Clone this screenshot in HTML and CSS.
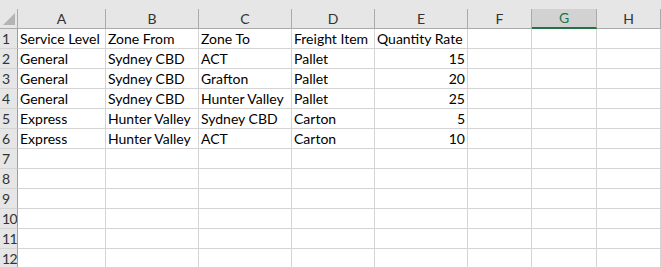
FILE: index.html
```html
<!DOCTYPE html>
<html>
<head>
<meta charset="utf-8">
<link rel="stylesheet" href="styles.css">
</head>
<body>
<div class="sheet">
  <div class="topband"></div>
  <div class="grid">
    <div class="corner"><span class="tri"></span></div>
    <div class="colhead">A</div>
    <div class="colhead">B</div>
    <div class="colhead">C</div>
    <div class="colhead">D</div>
    <div class="colhead">E</div>
    <div class="colhead">F</div>
    <div class="colhead sel">G</div>
    <div class="colhead">H</div>

    <div class="rowhead">1</div>
    <div class="cell">Service Level</div>
    <div class="cell">Zone From</div>
    <div class="cell">Zone To</div>
    <div class="cell">Freight Item</div>
    <div class="cell">Quantity Rate</div>
    <div class="cell"></div><div class="cell"></div><div class="cell"></div>

    <div class="rowhead">2</div>
    <div class="cell">General</div>
    <div class="cell">Sydney CBD</div>
    <div class="cell">ACT</div>
    <div class="cell">Pallet</div>
    <div class="cell num">15</div>
    <div class="cell"></div><div class="cell"></div><div class="cell"></div>

    <div class="rowhead">3</div>
    <div class="cell">General</div>
    <div class="cell">Sydney CBD</div>
    <div class="cell">Grafton</div>
    <div class="cell">Pallet</div>
    <div class="cell num">20</div>
    <div class="cell"></div><div class="cell"></div><div class="cell"></div>

    <div class="rowhead">4</div>
    <div class="cell">General</div>
    <div class="cell">Sydney CBD</div>
    <div class="cell">Hunter Valley</div>
    <div class="cell">Pallet</div>
    <div class="cell num">25</div>
    <div class="cell"></div><div class="cell"></div><div class="cell"></div>

    <div class="rowhead">5</div>
    <div class="cell">Express</div>
    <div class="cell">Hunter Valley</div>
    <div class="cell">Sydney CBD</div>
    <div class="cell">Carton</div>
    <div class="cell num">5</div>
    <div class="cell"></div><div class="cell"></div><div class="cell"></div>

    <div class="rowhead">6</div>
    <div class="cell">Express</div>
    <div class="cell">Hunter Valley</div>
    <div class="cell">ACT</div>
    <div class="cell">Carton</div>
    <div class="cell num">10</div>
    <div class="cell"></div><div class="cell"></div><div class="cell"></div>

    <div class="rowhead">7</div>
    <div class="cell"></div><div class="cell"></div><div class="cell"></div><div class="cell"></div><div class="cell"></div><div class="cell"></div><div class="cell"></div><div class="cell"></div>
    <div class="rowhead">8</div>
    <div class="cell"></div><div class="cell"></div><div class="cell"></div><div class="cell"></div><div class="cell"></div><div class="cell"></div><div class="cell"></div><div class="cell"></div>
    <div class="rowhead">9</div>
    <div class="cell"></div><div class="cell"></div><div class="cell"></div><div class="cell"></div><div class="cell"></div><div class="cell"></div><div class="cell"></div><div class="cell"></div>
    <div class="rowhead">10</div>
    <div class="cell"></div><div class="cell"></div><div class="cell"></div><div class="cell"></div><div class="cell"></div><div class="cell"></div><div class="cell"></div><div class="cell"></div>
    <div class="rowhead">11</div>
    <div class="cell"></div><div class="cell"></div><div class="cell"></div><div class="cell"></div><div class="cell"></div><div class="cell"></div><div class="cell"></div><div class="cell"></div>
    <div class="rowhead">12</div>
    <div class="cell"></div><div class="cell"></div><div class="cell"></div><div class="cell"></div><div class="cell"></div><div class="cell"></div><div class="cell"></div><div class="cell"></div>
  </div>
</div>
</body>
</html>
```

FILE: styles.css
```css
html, body {
  margin: 0;
  padding: 0;
  background: #ffffff;
  overflow: hidden;
}

.sheet {
  width: 661px;
  font-family: Lato, "Open Sans", sans-serif;
  font-size: 14px;
  color: #000;
}

.topband {
  height: 9px;
  background: #e6e6e6;
}

.grid {
  display: grid;
  grid-template-columns: 18px 88px 93px 93px 83px 93px 64px 65px 64px;
  grid-auto-rows: 20px;
}

.corner {
  background: #e6e6e6;
  border-right: 1px solid #ababab;
  border-bottom: 1px solid #ababab;
  position: relative;
}

.tri {
  position: absolute;
  right: 2px;
  bottom: 3px;
  width: 0;
  height: 0;
  border-left: 12px solid transparent;
  border-bottom: 12px solid #b4b4b4;
}

.colhead {
  background: #e6e6e6;
  border-right: 1px solid #ababab;
  border-bottom: 1px solid #ababab;
  text-align: center;
  line-height: 19px;
  color: #333;
}

.colhead.sel {
  background: #d2d2d2;
  color: #217346;
  border-bottom: 2px solid #217346;
  line-height: 18px;
}

.rowhead {
  background: #e6e6e6;
  border-right: 1px solid #9e9e9e;
  border-bottom: 1px solid #d4d4d4;
  line-height: 20px;
  padding-left: 2px;
  color: #333;
  font-size: 14px;
  overflow: hidden;
  white-space: nowrap;
  letter-spacing: -0.5px;
}

.cell {
  border-right: 1px solid #d4d4d4;
  border-bottom: 1px solid #d4d4d4;
  line-height: 20px;
  padding: 0 2px 0 2px;
  white-space: nowrap;
  overflow: hidden;
}

.cell.num {
  text-align: right;
}
```
